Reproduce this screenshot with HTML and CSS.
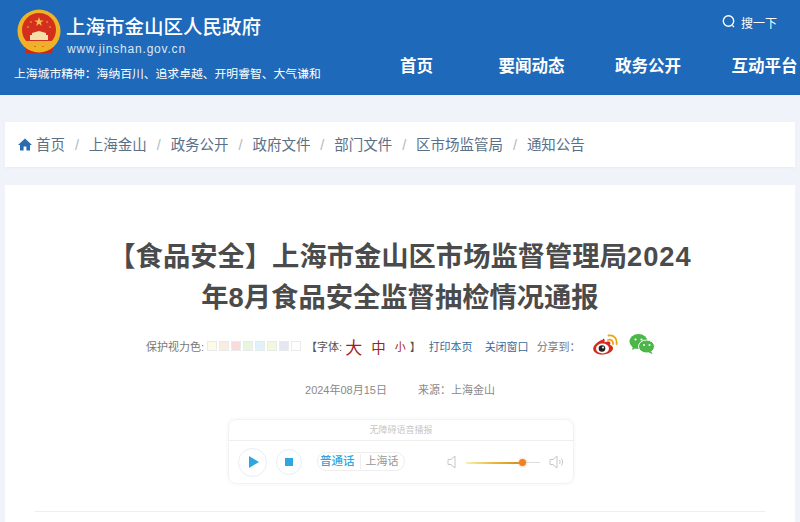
FILE: index.html
```html
<!DOCTYPE html>
<html lang="zh-CN">
<head>
    <meta charset="UTF-8">
    <title>上海市金山区人民政府</title>
    <link rel="stylesheet" href="styles.css">
</head>
<body>
    <div class="header">
        <div class="brand">
            <div class="brand-top">
                <svg class="emblem" width="44" height="46" viewBox="0 0 44 46">
                    <path d="M7 34h30l-2 10H9z" fill="#c8281e"/>
                    <circle cx="22" cy="22" r="21.500" fill="#f0b323"/>
                    <circle cx="22" cy="21" r="17" fill="#d22f1f"/>
                    <path d="M22 8l1.200 3.400h3.500l-2.900 2.100 1.100 3.400-2.900-2.100-2.900 2.100 1.100-3.400-2.900-2.100h3.500z" fill="#f2c04a"/>
                    <circle cx="14" cy="13" r="0.800" fill="#f2c04a"/>
                    <circle cx="30" cy="13" r="0.800" fill="#f2c04a"/>
                    <circle cx="11" cy="18" r="0.800" fill="#f2c04a"/>
                    <circle cx="33" cy="18" r="0.800" fill="#f2c04a"/>
                    <path d="M15 24l7-2 7 2v2h2v5H13v-5h2z" fill="#f5dfa8"/>
                    <path d="M7 32h30v3l-6 5-3-3h-12l-3 3-6-5z" fill="#eeb02a"/>
                    <rect x="19" y="36" width="6" height="5" fill="#f0b323"/>
                </svg>
                <div>
                    <div class="site-name">上海市金山区人民政府</div>
                    <div class="site-url">www.jinshan.gov.cn</div>
                </div>
            </div>
            <div class="motto">上海城市精神：海纳百川、追求卓越、开明睿智、大气谦和</div>
        </div>
        <div class="header-right">
            <div class="search">
                <svg width="16" height="16" viewBox="0 0 16 16">
                    <circle cx="7.500" cy="7" r="5.200" fill="none" stroke="#fff" stroke-width="1.400"/>
                    <path d="M11.500 11.500l1.500 1.500" stroke="#fff" stroke-width="1.200"/>
                </svg>
                <span>搜一下</span>
            </div>
            <div class="nav">
                <a class="nav-home">首页</a>
                <a>要闻动态</a>
                <a>政务公开</a>
                <a>互动平台</a>
            </div>
        </div>
    </div>

    <div class="page">
        <div class="crumbs">
            <svg width="14" height="13" viewBox="0 0 14 13">
                <path d="M7 0.500L0 7h2v5.500h3.600V8.600h2.800v3.900H12V7h2z" fill="#2b6cb0"/>
            </svg>
            <span>首页</span><i>/</i>
            <span>上海金山</span><i>/</i>
            <span>政务公开</span><i>/</i>
            <span>政府文件</span><i>/</i>
            <span>部门文件</span><i>/</i>
            <span>区市场监管局</span><i>/</i>
            <span>通知公告</span>
        </div>

        <div class="article">
            <h1 class="title">【食品安全】上海市金山区市场监督管理局<span class="title-year">2024</span>年8月食品安全监督抽检情况通报</h1>

            <div class="tools">
                <span>保护视力色:</span>
                <div class="swatches">
                    <b class="c1"></b><b class="c2"></b><b class="c3"></b><b class="c4"></b>
                    <b class="c5"></b><b class="c6"></b><b class="c7"></b><b class="c8"></b>
                </div>
                <span class="font-open">【字体:</span>
                <span class="size-l">大</span>
                <span class="size-m">中</span>
                <span class="size-s">小</span>
                <span class="font-close">】</span>
                <a class="print">打印本页</a>
                <a class="close">关闭窗口</a>
                <span class="share">分享到：</span>
                <svg class="weibo" width="26" height="22" viewBox="0 0 26 22">
                    <path d="M11 5.500C5.500 7.500 1 11.500 1.200 15c.2 3.600 5 6 10 5.600 5.500-.4 10-3.400 9.800-6.600-.1-1.900-1.800-2.700-3-3 .6-1.400.5-2.600-.4-3.200-1.200-.8-3.300-.3-5 .5.300-1.600.1-2.700-.5-3.200-.3-.2-.7-.3-1.100-.6z" fill="#d9291c"/>
                    <ellipse cx="10.500" cy="14.500" rx="6.500" ry="5" fill="#fff"/>
                    <circle cx="10" cy="14.500" r="3.300" fill="#222"/>
                    <circle cx="11" cy="13.600" r="1" fill="#fff"/>
                    <path d="M16 6c3-1 5.500 1 5 4M16.500 1.500c5.500-1 9 3.500 8 8.500" fill="none" stroke="#eda21c" stroke-width="1.800" stroke-linecap="round"/>
                </svg>
                <svg class="wechat" width="26" height="22" viewBox="0 0 26 22">
                    <ellipse cx="9.500" cy="8.500" rx="9" ry="7.500" fill="#4cb648"/>
                    <path d="M4 13l-1 4 4-2z" fill="#4cb648"/>
                    <ellipse cx="17.500" cy="13.500" rx="8" ry="6.500" fill="#4cb648" stroke="#fff" stroke-width="1"/>
                    <path d="M22 18l1.500 3-4-1.500z" fill="#4cb648"/>
                    <circle cx="6.500" cy="6.500" r="1.100" fill="#fff"/>
                    <circle cx="12.500" cy="6.500" r="1.100" fill="#fff"/>
                    <circle cx="15" cy="12" r="1" fill="#fff"/>
                    <circle cx="20.500" cy="12" r="1" fill="#fff"/>
                </svg>
            </div>

            <div class="meta">
                <span>2024年08月15日</span>
                <span>来源：上海金山</span>
            </div>

            <div class="player">
                <div class="player-title">无障碍语音播报</div>
                <div class="player-body">
                    <div class="round-btn play"><s></s></div>
                    <div class="round-btn stop"><s></s></div>
                    <div class="lang">
                        <span class="lang-on">普通话</span>
                        <span class="lang-off">上海话</span>
                    </div>
                    <svg class="vol-low" width="10" height="14" viewBox="0 0 10 14">
                        <path d="M1 4.500h3L8 1v12L4 9.500H1z" fill="none" stroke="#c4c8cc"/>
                    </svg>
                    <div class="slider"><div class="slider-fill" style="width: 76%"></div><div class="slider-knob" style="left: 76%"></div></div>
                    <svg class="vol-high" width="16" height="14" viewBox="0 0 16 14">
                        <path d="M1 4.500h3L8 1v12L4 9.500H1z" fill="none" stroke="#c4c8cc"/>
                        <path d="M10.500 5c.8 1.200.8 2.800 0 4M12.500 3.500c1.400 2 1.400 5 0 7" fill="none" stroke="#c4c8cc"/>
                    </svg>
                </div>
            </div>

            <div class="rule"></div>
        </div>
    </div>
</body>
</html>
```

FILE: styles.css
```css
html, body {
    height: 522px;
    overflow: hidden;
}
body {
    margin: 0;
    background-color: #f0f3f9;
    font-family: "Liberation Sans", "Noto Sans CJK SC", sans-serif;
    color: #666;
}
.header {
    height: 95px;
    background-color: #1e69b9;
    display: flex;
    color: #fff;
}
.brand {
    width: 352px;
    padding: 9px 0 0 14px;
    box-sizing: border-box;
}
.brand-top {
    display: flex;
    gap: 5px;
}
.emblem {
    margin: 0 0 0 3px;
}
.site-name {
    font-size: 19.500px;
    line-height: 26px;
    margin-top: 5px;
    font-weight: 500;
}
.site-url {
    font-size: 12px;
    line-height: 16px;
    margin-top: 1px;
    margin-left: 1px;
    letter-spacing: 0.800px;
    color: #dce9f6;
}
.motto {
    font-size: 11.800px;
    line-height: 16px;
    margin-top: 9px;
    white-space: nowrap;
}
.header-right {
    flex: 1;
    display: flex;
    flex-direction: column;
    overflow: hidden;
}
.search {
    display: flex;
    align-items: center;
    gap: 4px;
    font-size: 12px;
    height: 20px;
    margin: 12px 0 0 369px;
}
.nav {
    display: flex;
    gap: 50.500px;
    margin: 22px 0 0 48px;
    font-size: 16.500px;
    line-height: 24px;
    font-weight: 700;
    white-space: nowrap;
}
.nav .nav-home {
    margin-right: 15px;
}
.page {
    padding: 27px 5px 0;
}
.crumbs {
    height: 45px;
    background-color: #fff;
    display: flex;
    align-items: center;
    padding-left: 13px;
    font-size: 14.500px;
    line-height: 44px;
    color: #5b7087;
    box-shadow: 0 1px 3px rgba(0, 0, 0, 0.04);
}
.crumbs svg {
    margin-right: 4px;
}
.crumbs i {
    font-style: normal;
    color: #b5b9bf;
    margin: 0 9.900px;
}
.article {
    margin-top: 18px;
    background-color: #fff;
    height: 340px;
    padding: 51px 30px 0;
    box-sizing: border-box;
}
.title {
    width: 592px;
    margin: 0 auto;
    font-size: 27.300px;
    line-height: 41px;
    font-weight: 700;
    color: #4b4b4b;
    text-align: center;
}
.title-year {
    letter-spacing: 1px;
}
.tools {
    display: flex;
    align-items: center;
    height: 24px;
    margin: 16px 0 0 111px;
    font-size: 11px;
    color: #777;
    white-space: nowrap;
}
.swatches {
    display: flex;
    gap: 2px;
    margin-left: 3px;
}
.swatches b {
    width: 8px;
    height: 8px;
    border: 1px solid #e8eaec;
}
.swatches .c1 { background-color: #fbfbe8; }
.swatches .c2 { background-color: #fbece0; }
.swatches .c3 { background-color: #f8dcdc; }
.swatches .c4 { background-color: #e9f6de; }
.swatches .c5 { background-color: #dff2fa; }
.swatches .c6 { background-color: #f1f8dc; }
.swatches .c7 { background-color: #e4e6f0; }
.swatches .c8 { background-color: #fff; }
.font-open {
    margin-left: 5px;
    color: #555;
}
.size-l, .size-m, .size-s {
    color: #a5201c;
}
.size-l {
    font-size: 17px;
    margin-left: 3px;
}
.size-m {
    font-size: 14.500px;
    margin-left: 9px;
}
.size-s {
    font-size: 11px;
    margin-left: 9px;
}
.font-close {
    margin-left: 4px;
    color: #555;
}
.print, .close {
    color: #3d6a96;
}
.print {
    margin-left: 8px;
}
.close {
    margin-left: 12px;
}
.share {
    margin-left: 8px;
}
.weibo {
    margin-left: 11px;
    position: relative;
    top: -1px;
}
.wechat {
    margin-left: 11px;
    position: relative;
    top: -2px;
}
.meta {
    display: flex;
    justify-content: center;
    gap: 31px;
    margin-top: 24px;
    font-size: 11px;
    line-height: 16px;
    color: #8a8a8a;
}
.player {
    width: 346px;
    height: 65px;
    margin: 21px 0 0 193px;
    border: 1px solid #f2f2f2;
    border-radius: 8px;
    box-shadow: 0 0 4px rgba(0, 0, 0, 0.05);
    box-sizing: border-box;
}
.player-title {
    height: 21px;
    line-height: 20px;
    text-align: center;
    font-size: 9px;
    color: #c8c8c8;
    border-bottom: 1px solid #eee;
    box-sizing: border-box;
}
.player-body {
    display: flex;
    align-items: center;
    height: 42px;
    padding-left: 9px;
}
.round-btn {
    box-sizing: border-box;
    border-radius: 50%;
    border: 1px solid #e6eef7;
    display: flex;
    align-items: center;
    justify-content: center;
}
.play {
    width: 29px;
    height: 29px;
}
.play s {
    border-left: 10px solid #2ea7e0;
    border-top: 6px solid transparent;
    border-bottom: 6px solid transparent;
    margin-left: 2px;
}
.stop {
    width: 26px;
    height: 26px;
    margin-left: 9px;
}
.stop s {
    width: 8px;
    height: 8px;
    background-color: #2ea7e0;
}
.lang {
    display: flex;
    align-items: center;
    height: 17px;
    margin-left: 15px;
    border: 1px solid #eee;
    border-radius: 9px;
    font-size: 11px;
    line-height: 15px;
    margin-top: -1px;
}
.lang-on {
    padding: 0 5px 0 2px;
    font-size: 11.500px;
    font-weight: 500;
    color: #2ea7e0;
    border-right: 1px solid #eee;
}
.lang-off {
    padding: 0 5px;
    color: #999;
}
.vol-low {
    margin-left: 42px;
}
.slider {
    position: relative;
    width: 74px;
    height: 1px;
    margin-left: 9px;
    background-color: #ddd;
}
.slider-fill {
    height: 2px;
    background: linear-gradient(to right, #fbeeb0, #e8b93a 50%, #d08a20);
}
.slider-knob {
    position: absolute;
    top: -3px;
    width: 7px;
    height: 7px;
    margin-left: -3px;
    border-radius: 50%;
    background-color: #f08020;
    box-shadow: 0 0 3px #f5b070;
}
.vol-high {
    margin-left: 9px;
}
.rule {
    height: 1px;
    margin-top: 27px;
    background-color: #eee;
}
```
